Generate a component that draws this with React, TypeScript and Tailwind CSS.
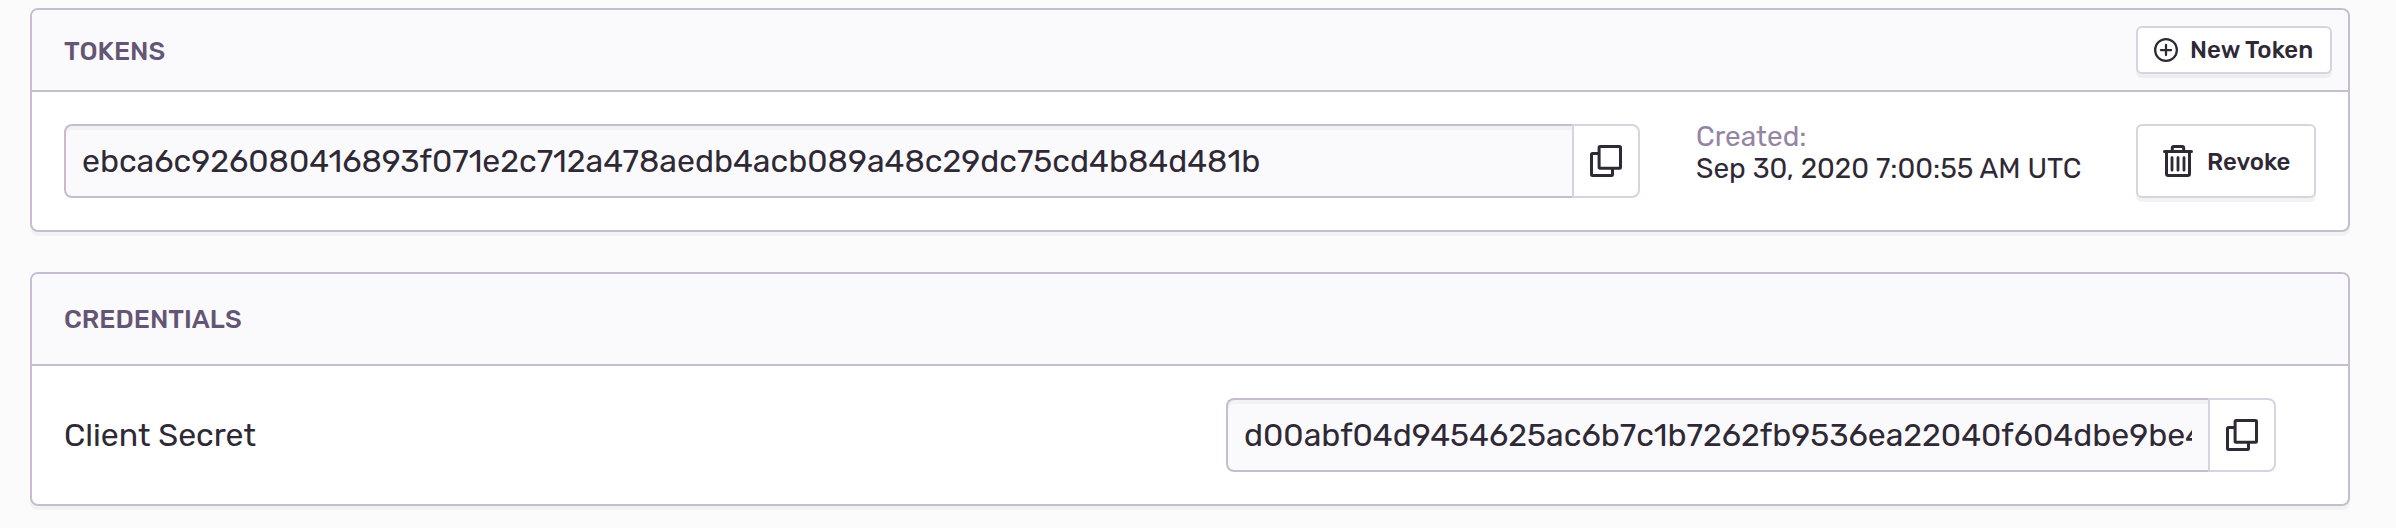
import React from "react";

function CopyIcon() {
  return (
    <svg viewBox="0 0 16 16" className="h-8 w-8 shrink-0" fill="none" stroke="currentColor" strokeWidth="1.5" strokeLinejoin="round">
      <rect x="4.55" y="0.75" width="10.7" height="10.9" rx="0.5" />
      <path d="M4.55 4.25H1.25a.5.5 0 0 0-.5.5v10c0 .3.2.5.5.5h9.5a.5.5 0 0 0 .5-.5v-3.1" />
    </svg>
  );
}

function AddIcon() {
  return (
    <svg viewBox="0 0 16 16" className="h-6 w-6 shrink-0" fill="none" stroke="currentColor" strokeWidth="1.5" strokeLinecap="round">
      <circle cx="8" cy="8" r="7.25" />
      <path d="M8 4.6v6.8M4.6 8h6.8" />
    </svg>
  );
}

function TrashIcon() {
  return (
    <svg viewBox="0 0 16 16" className="h-8 w-8 shrink-0" fill="none" stroke="currentColor" strokeWidth="1.5" strokeLinecap="round" strokeLinejoin="round">
      <path d="M1.25 3.25h13.5M2.25 3.4v10.95c0 .5.4.9.9.9h9.7c.5 0 .9-.4.9-.9V3.4" />
      <path d="M5.15 3V1.5c0-.4.35-.75.75-.75h4.2c.4 0 .75.35.75.75V3" />
      <path strokeWidth="1.4" d="M5 6.3v6.3M8 6.3v6.3M11 6.3v6.3" />
    </svg>
  );
}

function CopyField({ value, className }: { value: string; className: string }) {
  return (
    <div className={"flex h-[74px] " + className}>
      <div className="flex min-w-0 flex-1 items-center rounded-l-lg border-2 border-r-0 border-[#c6becf] bg-[#fafafc] px-4 shadow-[inset_0_4px_0_rgba(43,34,51,0.04)]">
        <span className="overflow-hidden text-[32px] leading-10 whitespace-nowrap">{value}</span>
      </div>
      <button className="flex w-[68px] items-center justify-center rounded-r-lg border-2 border-[#d9d2e0] bg-white">
        <CopyIcon />
      </button>
    </div>
  );
}

function Panel({ children }: { children: React.ReactNode }) {
  return (
    <section className="rounded-lg border-2 border-[#c6becf] bg-white shadow-[0_4px_0_rgba(43,34,51,0.04)]">
      {children}
    </section>
  );
}

export default function App() {
  return (
    <main className="flex h-[528px] w-[2396px] flex-col gap-10 overflow-hidden bg-[#fbfbfb] pt-2 pr-[46px] pl-[30px] font-['Rubik','Roboto',sans-serif] text-[#2f2936]">
      <Panel>
        <header className="flex h-[82px] items-center justify-between rounded-t-md border-b-2 border-[#c6becf] bg-[#fafafc] pr-4 pl-8">
          <h2 className="pt-1 text-[26px] leading-8 font-medium text-[#645574]">TOKENS</h2>
          <button className="flex h-12 w-[196px] items-center gap-3 rounded-md border-2 border-[#d9d2e0] bg-white pl-4 text-2xl leading-6 font-medium whitespace-nowrap shadow-[0_4px_0_rgba(43,34,51,0.06)]">
            <AddIcon />
            <span className="tracking-[0.1px]">New Token</span>
          </button>
        </header>
        <div className="flex h-[138px] items-center px-8">
          <CopyField value="ebca6c926080416893f071e2c712a478aedb4acb089a48c29dc75cd4b84d481b" className="w-[1576px]" />
          <div className="ml-14 w-[440px] pb-4 text-[28px] leading-8 whitespace-nowrap">
            <div className="text-[#9585a3]">Created:</div>
            <div>Sep 30, 2020 7:00:55 AM UTC</div>
          </div>
          <button className="flex h-[74px] w-[180px] items-center gap-3 rounded-md border-2 border-[#d9d2e0] bg-white pl-6 text-2xl font-medium shadow-[0_4px_0_rgba(43,34,51,0.06)]">
            <TrashIcon />
            <span className="pt-0.5 pl-px">Revoke</span>
          </button>
        </div>
      </Panel>
      <Panel>
        <header className="flex h-[92px] items-center rounded-t-md border-b-2 border-[#c6becf] bg-[#fafafc] px-8">
          <h2 className="pt-0.5 text-[26px] leading-8 font-medium text-[#645574]">CREDENTIALS</h2>
        </header>
        <div className="flex h-[138px] items-center justify-between pr-[72px] pl-8">
          <span className="text-[32px] leading-10">Client Secret</span>
          <CopyField value="d00abf04d9454625ac6b7c1b7262fb9536ea22040f604dbe9be4" className="w-[1050px]" />
        </div>
      </Panel>
    </main>
  );
}
